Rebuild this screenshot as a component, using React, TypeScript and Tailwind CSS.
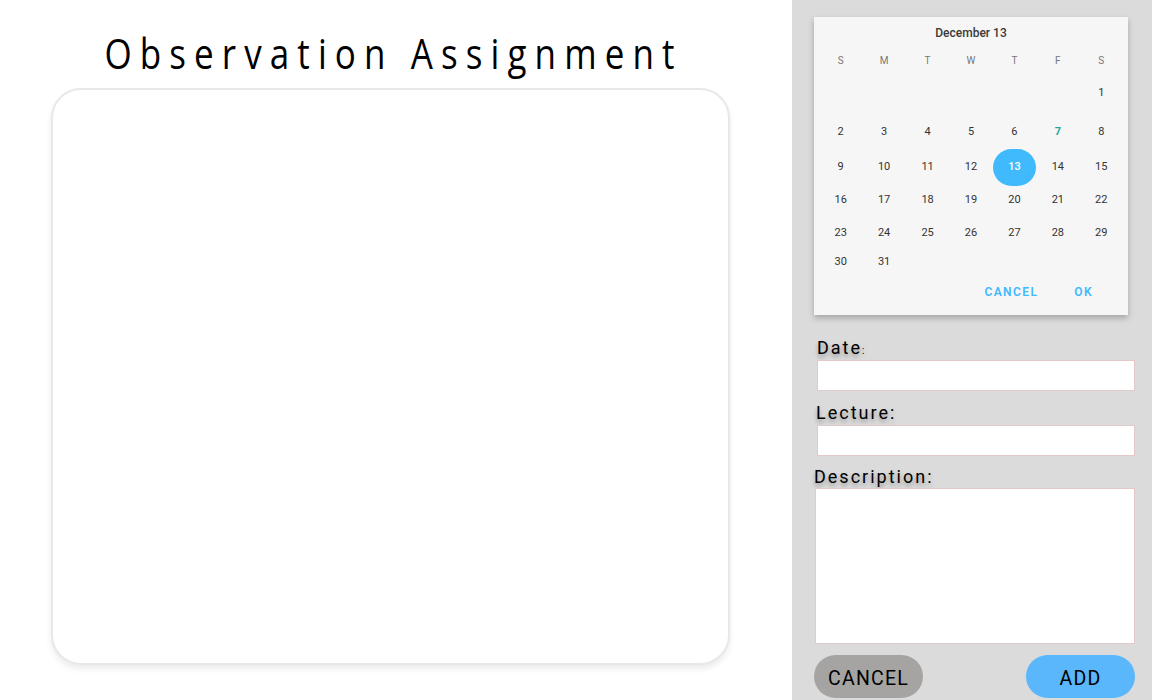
import React from "react";

const weeks: (number | null)[][] = [
  [null, null, null, null, null, null, 1],
  [2, 3, 4, 5, 6, 7, 8],
  [9, 10, 11, 12, 13, 14, 15],
  [16, 17, 18, 19, 20, 21, 22],
  [23, 24, 25, 26, 27, 28, 29],
  [30, 31, null, null, null, null, null],
];

const rowClass = ["h-[44px]", "h-[34px]", "h-[34px]", "h-[34px]", "h-[33px]", "h-[24px]"];

const DayCell = ({ day }: { day: number | null }) => {
  if (day === null) return <div />;
  if (day === 13) {
    return (
      <div className="flex items-center justify-center">
        <div className="flex h-[37px] w-[44px] items-center justify-center rounded-full bg-[#40b9fd] text-[11px] font-medium text-white">
          13
        </div>
      </div>
    );
  }
  return (
    <div
      className={
        day === 7
          ? "flex items-center justify-center text-[11px] font-bold text-[#26a69a]"
          : "flex items-center justify-center text-[11px] text-[#333]"
      }
    >
      {day}
    </div>
  );
};

const Calendar = () => {
  return (
    <div className="h-[298px] w-[314px] bg-[#f6f6f6] px-[5px] shadow-[0_3px_6px_rgba(0,0,0,0.25)]">
      <div className="flex h-[32px] items-center justify-center text-[12px] font-medium text-[#3a3a3a]">
        December 13
      </div>
      <div className="grid h-[22px] grid-cols-7 items-center text-center text-[10px] text-[#777]">
        {["S", "M", "T", "W", "T", "F", "S"].map((d, i) => (
          <div key={i}>{d}</div>
        ))}
      </div>
      {weeks.map((w, r) => (
        <div key={r} className={`grid grid-cols-7 ${rowClass[r]}`}>
          {w.map((d, i) => (
            <DayCell key={i} day={d} />
          ))}
        </div>
      ))}
      <div className="flex h-[36px] items-center justify-end gap-[36px] pr-[30px] text-[12px] font-semibold tracking-[1.4px] text-[#40b9fd]">
        <span>CANCEL</span>
        <span>OK</span>
      </div>
    </div>
  );
};

const labelCls =
  "text-[18px] leading-none tracking-[2px] text-black [text-shadow:0_3px_4px_rgba(0,0,0,0.35)]";

const App = () => {
  return (
    <main className="flex h-[700px] w-[1152px] overflow-hidden bg-white font-['Roboto',sans-serif]">
      <section className="flex w-[792px] flex-col pl-[51px]">
        <div className="flex h-[88px] w-[679px] items-center justify-center pt-[16px] pl-[6px]">
          <h1 className="scale-y-[1.2] font-['Open_Sans',sans-serif] text-[35px] leading-none tracking-[8.1px] text-black">
            Observation Assignment
          </h1>
        </div>
        <div className="h-[577px] w-[679px] rounded-[30px] border-[2px] border-[#e8e8e8] bg-white shadow-[0_4px_6px_rgba(0,0,0,0.08)]"></div>
      </section>
      <aside className="flex w-[360px] flex-col bg-[#dbdbdb] pt-[17px] pl-[22px] pr-[17px]">
        <Calendar />
        <div className="mt-[21px] flex h-[24px] items-center pl-[3px]">
          <span className={labelCls}>
            Date<span className="text-[10px]">:</span>
          </span>
        </div>
        <input className="ml-[3px] h-[31px] w-[318px] border border-[#e2caca] bg-white" />
        <div className="mt-[10px] flex h-[24px] items-center pl-[2px]">
          <span className={labelCls}>Lecture:</span>
        </div>
        <input className="ml-[3px] h-[31px] w-[318px] border border-[#e2caca] bg-white" />
        <div className="mt-[10px] flex h-[22px] items-center">
          <span className={labelCls}>Description:</span>
        </div>
        <textarea className="ml-[1px] h-[156px] w-[320px] resize-none border border-[#e2caca] bg-white" />
        <div className="mt-[11px] flex items-center justify-between">
          <button className="h-[43px] w-[109px] rounded-full bg-[#a5a4a3] pt-[4px] text-[19.5px] tracking-[1.2px] text-black">
            CANCEL
          </button>
          <button className="h-[43px] w-[109px] rounded-full bg-[#5ab7fb] pt-[4px] text-[19.5px] tracking-[1.2px] text-black">
            ADD
          </button>
        </div>
      </aside>
    </main>
  );
};

export default App;
